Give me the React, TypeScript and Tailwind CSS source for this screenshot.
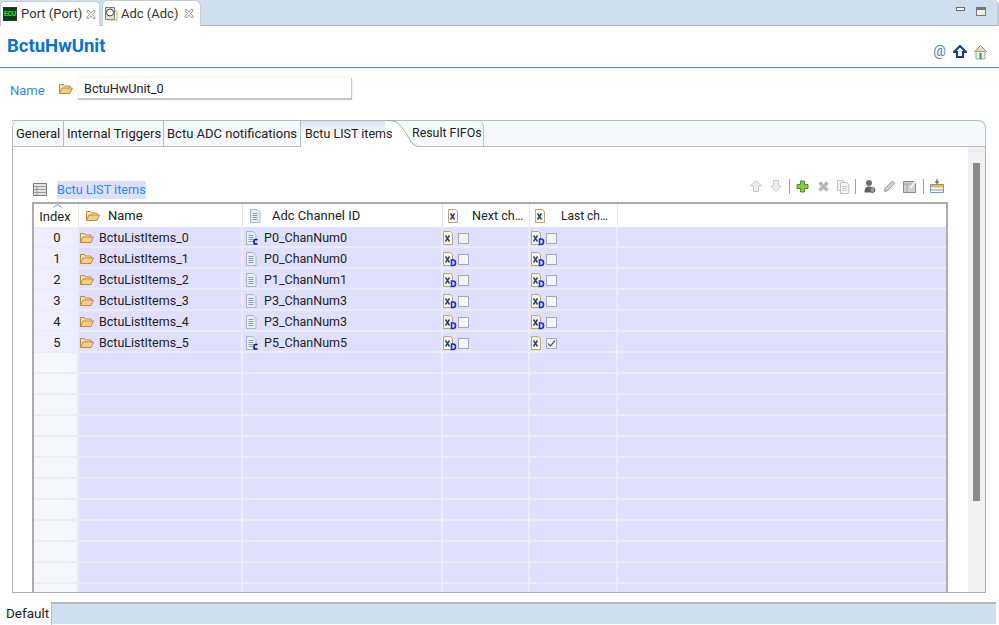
import React from 'react';

const rows = [
  { name: 'BctuListItems_0', chan: 'P0_ChanNum0', c: true, nextD: false, lastD: true, on: false },
  { name: 'BctuListItems_1', chan: 'P0_ChanNum0', c: false, nextD: true, lastD: true, on: false },
  { name: 'BctuListItems_2', chan: 'P1_ChanNum1', c: false, nextD: true, lastD: true, on: false },
  { name: 'BctuListItems_3', chan: 'P3_ChanNum3', c: false, nextD: true, lastD: true, on: false },
  { name: 'BctuListItems_4', chan: 'P3_ChanNum3', c: false, nextD: true, lastD: true, on: false },
  { name: 'BctuListItems_5', chan: 'P5_ChanNum5', c: true, nextD: true, lastD: false, on: true },
];
const emptyRows = Array.from({ length: 12 }, (_, i) => i);

const Folder = () => (
  <svg width="16" height="14" viewBox="0 0 16 14" className="shrink-0">
    <path d="M1.500 11.500V2.500h4l1 1.500h5.500V6" fill="#f6e3b4" stroke="#b98a3e" />
    <path d="M1.500 11.500L4 6h10.500L12 11.500z" fill="#f9cf87" stroke="#b98a3e" />
  </svg>
);

const Doc = ({ c }: { c?: boolean }) => (
  <svg width="13" height="16" viewBox="0 0 13 16" className="shrink-0">
    <path d="M1.500 1.500h6.500l3 3v10h-9.500z" fill="#e8eef6" stroke="#a9b4c4" />
    <path d="M3.500 5.500h5M3.500 7.500h5M3.500 9.500h5M3.500 11.500h5" stroke="#8d9aae" />
    {c && (
      <path d="M12.500 9.500h-2a1.500 1.500 0 0 0-1.500 1.500v1.500a1.500 1.500 0 0 0 1.500 1.500h2" fill="none" stroke="#10108f" strokeWidth="1.600" />
    )}
  </svg>
);

const XIcon = ({ d }: { d?: boolean }) => (
  <svg width="14" height="16" viewBox="0 0 14 16" className="shrink-0">
    <path d="M.5 1.500h7l2 2v11h-9z" fill="#f6f3ea" stroke="#b8a878" />
    <path d="M2.500 5.500l4 6M6.500 5.500l-4 6" stroke="#2f3f62" strokeWidth="1.400" />
    {d && (
      <path d="M8.500 9h1.500a2.500 2.500 0 0 1 2.500 2.500v.5a2.500 2.500 0 0 1-2.500 2.500H8.500z" fill="#dfdfff" stroke="#1a2fc4" strokeWidth="1.600" />
    )}
  </svg>
);

const Check = ({ on }: { on?: boolean }) => (
  <span className="w-[11px] h-[11px] border border-[#a8a8b4] bg-[#f4f5fb] flex items-center justify-center shrink-0">
    {on && (
      <svg width="9" height="9" viewBox="0 0 9 9">
        <path d="M1 4.500l2.500 2.500L8 1.500" fill="none" stroke="#55586a" strokeWidth="1.200" />
      </svg>
    )}
  </span>
);

const CloseIcon = () => (
  <svg width="10" height="9" viewBox="0 0 10 9" className="ml-auto mr-[6px] shrink-0">
    <path d="M1 .5h2L5 3l2-2.500h2v1.500L6.500 4.500 9 7v1.500H7L5 6 3 8.500H1V7l2.500-2.500L1 2z" fill="#f2f2f2" stroke="#a2a2a2" />
  </svg>
);

const Sep = () => <div className="w-px h-[15px] bg-[#a0a0a0]" />;

const Toolbar = () => (
  <div className="flex items-center h-[16px]">
    <svg width="14" height="14" viewBox="0 0 14 14" className="ml-[748px]">
      <path d="M7 1.500L12.500 7H9.500v5.500h-5V7H1.500z" fill="#eef0ee" stroke="#c5c9c5" />
    </svg>
    <svg width="14" height="14" viewBox="0 0 14 14" className="ml-[6px]">
      <path d="M7 12.500L12.500 7H9.500V1.500h-5V7H1.500z" fill="#eef0ee" stroke="#c5c9c5" />
    </svg>
    <div className="ml-[6px]"><Sep /></div>
    <svg width="13" height="13" viewBox="0 0 13 13" className="ml-[6px]">
      <path d="M4.500 1h4v3.500H12v4H8.500V12h-4V8.500H1v-4h3.500z" fill="#8fc63f" stroke="#4c8a3a" />
    </svg>
    <svg width="13" height="13" viewBox="0 0 13 13" className="ml-[8px]">
      <path d="M2.500 2.500l8 8M10.500 2.500l-8 8" stroke="#b4b8bc" strokeWidth="3.400" />
    </svg>
    <svg width="14" height="15" viewBox="0 0 14 15" className="ml-[6px]">
      <path d="M1.500 1.500h6v10h-6z" fill="#f4f4f4" stroke="#c4c4c4" />
      <path d="M4.500 3.500h6l2.500 2.500v8.500H4.500z" fill="#f4f4f4" stroke="#c0c0c0" />
      <path d="M6 7.500h5M6 9.500h5M6 11.500h5" stroke="#c8c8c8" />
    </svg>
    <div className="ml-[5px]"><Sep /></div>
    <svg width="13" height="15" viewBox="0 0 13 15" className="ml-[7px]">
      <circle cx="6" cy="4" r="3" fill="#6f6f6f" />
      <path d="M1.500 13.500c0-5 2-6 4.500-6s4.500 1 4.500 6z" fill="#626262" />
      <circle cx="9.500" cy="11" r="2.500" fill="#a0a0a0" stroke="#626262" />
    </svg>
    <svg width="13" height="14" viewBox="0 0 13 14" className="ml-[7px]">
      <path d="M1.500 12.500l.7-3L9.500 2l2.300 2.300-7.300 7.400z" fill="#d4d4d4" stroke="#8f8f8f" />
    </svg>
    <svg width="14" height="14" viewBox="0 0 14 14" className="ml-[7px]">
      <path d="M.5 2.500h12v11H.5z" fill="#cfcfcf" stroke="#8a8a8a" />
      <path d="M.5 5h12M4 5v8" stroke="#a8a8a8" />
      <path d="M7 9l6-7" stroke="#f0f0f0" strokeWidth="2" />
    </svg>
    <div className="ml-[6px]"><Sep /></div>
    <svg width="14" height="15" viewBox="0 0 14 15" className="ml-[6px]">
      <path d="M7 0v5M5 3h4" stroke="#444" />
      <path d="M.5 5.500h13v8H.5z" fill="#fdfdfd" stroke="#7d93b8" />
      <path d="M1 6h12v2.500H1z" fill="#f0b840" />
      <path d="M1 11h12" stroke="#7d93b8" />
    </svg>
  </div>
);

const Cell = ({ className, children }: { className: string; children?: React.ReactNode }) => (
  <div className={`h-[19px] pt-[3px] flex items-center shrink-0 border-r-2 border-[#ebebf9] ${className}`}>{children}</div>
);

const Row = ({ children }: { children: React.ReactNode }) => (
  <div className="h-[21px] shrink-0 flex items-start bg-[#e0e0fd] border-b-2 border-[#ebebf9]">{children}</div>
);

export default function App() {
  return (
    <div className="w-[999px] h-[625px] overflow-hidden bg-white flex flex-col font-['Roboto',sans-serif] text-[12.5px] text-[#222]">
      {/* Editor tabs */}
      <div className="h-[26px] shrink-0 flex items-end bg-[#cfdfee] border-b border-[#a9b7c6] border-r-2 border-r-[#c4ccd4] rounded-tr-md">
        <div className="h-[25px] w-[100px] bg-white rounded-t border border-b-0 border-[#c4ccd4] flex items-center pl-[2px] gap-[4px] text-[#333] text-[13px] whitespace-nowrap -mb-px">
          <div className="w-[15px] h-[14px] bg-[#0b3d12] border border-[#333] flex items-center justify-center text-[7px] tracking-tighter text-[#34e034] font-bold">ECU</div>
          <span>Port (Port)</span>
          <CloseIcon />
        </div>
        <div className="h-[26px] w-[99px] ml-[2px] bg-white rounded-t-md border border-b-0 border-[#c4ccd4] flex items-center pl-[1px] gap-[3px] text-[#333] text-[13px] whitespace-nowrap -mb-px">
          <svg width="14" height="15" viewBox="0 0 14 15" className="shrink-0">
            <path d="M1.500 1.500h9v12h-9z" fill="#dde3ea" stroke="#6f7a88" />
            <circle cx="6" cy="6.500" r="3.500" fill="#fff" stroke="#444" />
            <path d="M11 5h2v9H4v-.5" fill="none" stroke="#c2a35a" />
          </svg>
          <span>Adc (Adc)</span>
          <CloseIcon />
        </div>
        <div className="ml-auto self-start flex items-start gap-[11px] mr-[11px] mt-[7px]">
          <div className="w-[9px] h-[4px] bg-[#f4f6f8] border border-[#6d6d6d]" />
          <div className="w-[10px] h-[9px] border border-[#777] border-t-[3px] bg-[#eef0f2]" />
        </div>
      </div>

      {/* Page heading */}
      <div className="h-[41px] shrink-0 flex items-center pl-[7px]">
        <h1 className="text-[18.500px] font-bold text-[#0a70d2]">BctuHwUnit</h1>
        <div className="ml-auto flex items-center gap-[6px] pr-[11px] pt-[10px]">
          <span className="text-[14px] text-[#3f7fb5] w-[15px] text-center">@</span>
          <svg width="14" height="13" viewBox="0 0 14 13">
            <path d="M7 1L13 7H10v5H4V7H1z" fill="#fff" stroke="#0a3f93" strokeWidth="2" />
          </svg>
          <svg width="15" height="16" viewBox="0 0 15 16">
            <path d="M1 8L7.500 1.500 14 8" fill="#e8d7b0" stroke="#a58a5c" />
            <path d="M3 7.500h9v7.500H3z" fill="#e6eee6" stroke="#a5a58c" />
            <path d="M6.500 9h2v6h-2z" fill="#3c9a46" />
          </svg>
        </div>
      </div>
      <div className="h-px shrink-0 bg-[#4a90d0]" />

      {/* Name field */}
      <div className="h-[52px] shrink-0 flex items-start pl-[10px] pt-[10px]">
        <div className="h-[22px] flex items-center">
          <span className="text-[#2a8be8] text-[13px] w-[48px] pt-[3px]">Name</span>
          <Folder />
          <div className="ml-[4px] w-[274px] h-[22px] bg-white border-r border-b-2 border-[#c8c8c8] shadow-[0_0_2px_#e0e0e0] flex items-center pl-[6px] pt-[1px] text-[12.700px]">
            BctuHwUnit_0
          </div>
        </div>
      </div>

      {/* Sub tabs + panel */}
      <div className="ml-[12px] w-[974px] h-[473px] shrink-0 flex flex-col">
        <div className="h-[27px] shrink-0 flex items-stretch rounded-tr-lg border-t border-r border-[#b8bcc2] bg-[#f6f9fc] text-[13px]">
          <div className="w-[52px] border-l border-b border-r border-[#b8bcc2] rounded-tl-md flex items-center pl-[3px]">General</div>
          <div className="w-[100px] border-b border-r border-[#b8bcc2] rounded-tl-md flex items-center pl-[3px]">Internal Triggers</div>
          <div className="w-[137px] border-b border-r border-[#b8bcc2] rounded-tl-md flex items-center pl-[3px]">Bctu ADC notifications</div>
          <div className="w-[84px] bg-gradient-to-b from-[#d8e3ee] to-white to-60% flex items-center pl-[4px] whitespace-nowrap text-[12.500px]">
            <span className="relative z-10">Bctu LIST items</span>
          </div>
          <svg width="34" height="27" viewBox="0 0 34 27" className="shrink-0 -mt-px">
            <path d="M0 0.500C12 0.500 12 2 18 9 24 16 26 26.500 34 26.500V28H0z" fill="#fff" />
            <path d="M0 0.500C12 0.500 12 2 18 9 24 16 26 26.500 34 26.500" fill="none" stroke="#9ea4ab" />
          </svg>
          <div className="w-[67px] -ml-[2px] border-b border-r border-[#b8bcc2] rounded-tr-md flex items-center whitespace-nowrap text-[12.400px]">
            <span className="-ml-[5px] relative z-10">Result FIFOs</span>
          </div>
          <div className="flex-1 border-b border-[#b8bcc2]" />
        </div>
        <div className="flex-1 min-h-0 flex border-l border-r border-b border-[#b0b0b0]">
          <div className="flex-1 min-w-0 flex flex-col pl-[19px] pt-[33px]">
            <div className="h-[19px] shrink-0 flex items-center relative">
              <svg width="14" height="13" viewBox="0 0 14 13" className="shrink-0 ml-[1px]">
                <path d="M.5 .5h13v12H.5z" fill="#e4e4e4" stroke="#777" />
                <path d="M.5 3.500h13M.5 6.500h13M.5 9.500h13M4 3.500v9" stroke="#9a9a9a" />
              </svg>
              <span className="ml-[10px] bg-[#e0e0fd] text-[#2a8be8] text-[12.700px] h-[18px] leading-[18px] whitespace-nowrap">Bctu LIST items</span>
              <div className="absolute left-[-31px] top-[-2px]">
                <Toolbar />
              </div>
            </div>
            <div className="mt-[3px] w-[916px] flex-1 min-h-0 overflow-hidden border-t-2 border-l-2 border-r-2 border-[#acacac] flex flex-col">
              <div className="h-[23px] shrink-0 flex items-center bg-white">
                <div className="w-[45px] h-full flex items-center justify-center border-r border-[#e6e6e6] relative pr-[2px]">
                  <svg width="9" height="4" viewBox="0 0 9 4" className="absolute top-0 left-[19px]">
                    <path d="M.5 3.500L4.500 .5l4 3" fill="none" stroke="#8a8a8a" />
                  </svg>
                  <span className="mt-[2px] text-[13px]">Index</span>
                </div>
                <div className="w-[164px] h-full flex items-center pl-[6px] pt-[1px] gap-[7px] border-r border-[#e6e6e6] text-[13px]">
                  <Folder />Name
                </div>
                <div className="w-[200px] h-full flex items-center pl-[6px] pt-[1px] gap-[10px] border-r border-[#e6e6e6] text-[13px]">
                  <Doc />Adc Channel ID
                </div>
                <div className="w-[87px] h-full flex items-center pl-[5px] pt-[1px] gap-[10px] border-r border-[#e6e6e6] text-[12.600px] whitespace-nowrap">
                  <XIcon />Next ch…
                </div>
                <div className="w-[88px] h-full flex items-center pl-[5px] pt-[1px] gap-[12px] border-r border-[#e6e6e6] text-[12px] whitespace-nowrap">
                  <XIcon />Last ch…
                </div>
              </div>
              {rows.map((r, i) => (
                <Row key={r.name}>
                  <Cell className="w-[45px] justify-center pl-[3px] bg-[#eeeefc] text-[13px]">{i}</Cell>
                  <Cell className="w-[164px] gap-[4px] whitespace-nowrap"><Folder />{r.name}</Cell>
                  <Cell className="w-[200px] pl-[2px] gap-[6px]"><Doc c={r.c} />{r.chan}</Cell>
                  <Cell className="w-[87px] gap-[1px]"><XIcon d={r.nextD} /><Check /></Cell>
                  <Cell className="w-[88px] pl-[1px] gap-[1px]"><XIcon d={r.lastD} /><Check on={r.on} /></Cell>
                </Row>
              ))}
              {emptyRows.map((n) => (
                <Row key={n}>
                  <Cell className="w-[45px] bg-[#f6f6fe]" />
                  <Cell className="w-[164px]" />
                  <Cell className="w-[200px]" />
                  <Cell className="w-[87px]" />
                  <Cell className="w-[88px]" />
                </Row>
              ))}
            </div>
          </div>
          <div className="w-[17px] shrink-0 bg-[#f0f0f0] flex justify-center pt-[16px]">
            <div className="w-[7px] h-[338px] bg-[#8a8a8a]" />
          </div>
        </div>
      </div>

      {/* Bottom page tabs */}
      <div className="mt-[9px] h-[23px] shrink-0 flex">
        <div className="w-[51px] h-full flex items-center pl-[6px] bg-white text-[13.500px] shadow-[1px_1px_1px_#c4c4c4]">Default</div>
        <div className="w-[945px] h-[22px] bg-[#cfdfee] border-t-2 border-[#b4b8bc] border-l border-l-[#c0c0c0]" />
      </div>
    </div>
  );
}
